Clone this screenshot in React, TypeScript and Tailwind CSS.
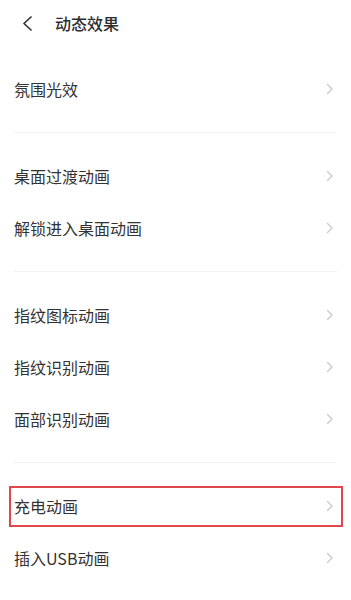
import React from "react";

const Chevron = () => (
  <svg width="8" height="12" viewBox="0 0 8 12" fill="none" className="shrink-0">
    <path d="M1.5 1.5L6 6L1.5 10.5" stroke="#c9c9c9" strokeWidth="1.3" strokeLinecap="round" strokeLinejoin="round" />
  </svg>
);

const Row = ({ label, highlight }: { label: string; highlight?: boolean }) => (
  <div className="relative flex h-[52px] items-center justify-between pl-[14px] pr-[17px]">
    <span className="text-[16px] leading-none text-[#333333]">{label}</span>
    <Chevron />
    {highlight && (
      <div className="pointer-events-none absolute left-[9px] right-[8px] top-[6px] bottom-[5px] border-2 border-[#e0464b]" />
    )}
  </div>
);

const Divider = () => <div className="mx-[14px] my-[17px] h-px bg-[#f2f2f2]" />;

export default function App() {
  return (
    <div
      className="min-h-[600px] w-[351px] bg-white"
      style={{ fontFamily: '"Noto Sans CJK SC", "Noto Sans", sans-serif' }}
    >
      <div className="flex h-[46px] items-center">
        <div className="flex w-[55px] justify-start pl-[22px]">
          <svg width="11" height="15" viewBox="0 0 11 15" fill="none">
            <path d="M9 1L2 7.5L9 14" stroke="#333333" strokeWidth="1.7" strokeLinecap="round" strokeLinejoin="round" />
          </svg>
        </div>
        <span className="text-[16px] font-medium leading-none text-[#2e2e2e]">动态效果</span>
      </div>
      <div className="pt-[17px]">
        <Row label="氛围光效" />
        <Divider />
        <Row label="桌面过渡动画" />
        <Row label="解锁进入桌面动画" />
        <Divider />
        <Row label="指纹图标动画" />
        <Row label="指纹识别动画" />
        <Row label="面部识别动画" />
        <Divider />
        <Row label="充电动画" highlight />
        <Row label="插入USB动画" />
      </div>
    </div>
  );
}
